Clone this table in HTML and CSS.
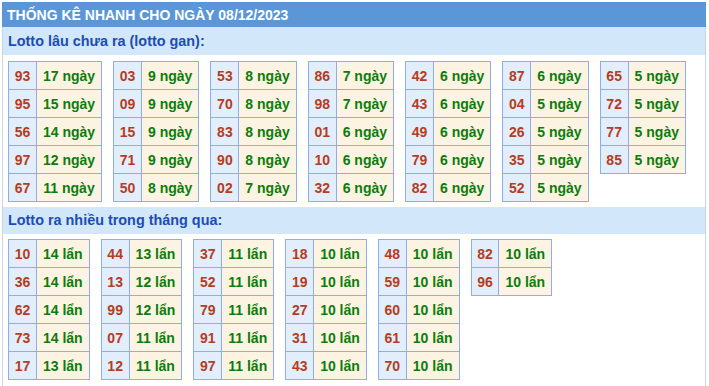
FILE: index.html
```html
<!DOCTYPE html>
<html lang="vi">
<head>
<meta charset="utf-8">
<link rel="stylesheet" href="styles.css">
</head>
<body>
<div class="wrap">
  <div class="title">THỐNG KÊ NHANH CHO NGÀY 08/12/2023</div>
  <div class="box">
    <div class="band">Lotto lâu chưa ra (lotto gan):</div>
    <div class="grid grid1">
      <table class="t"><tr><td class="n">93</td><td class="v">17 ngày</td></tr><tr><td class="n">95</td><td class="v">15 ngày</td></tr><tr><td class="n">56</td><td class="v">14 ngày</td></tr><tr><td class="n">97</td><td class="v">12 ngày</td></tr><tr><td class="n">67</td><td class="v">11 ngày</td></tr></table>
      <table class="t"><tr><td class="n">03</td><td class="v">9 ngày</td></tr><tr><td class="n">09</td><td class="v">9 ngày</td></tr><tr><td class="n">15</td><td class="v">9 ngày</td></tr><tr><td class="n">71</td><td class="v">9 ngày</td></tr><tr><td class="n">50</td><td class="v">8 ngày</td></tr></table>
      <table class="t"><tr><td class="n">53</td><td class="v">8 ngày</td></tr><tr><td class="n">70</td><td class="v">8 ngày</td></tr><tr><td class="n">83</td><td class="v">8 ngày</td></tr><tr><td class="n">90</td><td class="v">8 ngày</td></tr><tr><td class="n">02</td><td class="v">7 ngày</td></tr></table>
      <table class="t"><tr><td class="n">86</td><td class="v">7 ngày</td></tr><tr><td class="n">98</td><td class="v">7 ngày</td></tr><tr><td class="n">01</td><td class="v">6 ngày</td></tr><tr><td class="n">10</td><td class="v">6 ngày</td></tr><tr><td class="n">32</td><td class="v">6 ngày</td></tr></table>
      <table class="t"><tr><td class="n">42</td><td class="v">6 ngày</td></tr><tr><td class="n">43</td><td class="v">6 ngày</td></tr><tr><td class="n">49</td><td class="v">6 ngày</td></tr><tr><td class="n">79</td><td class="v">6 ngày</td></tr><tr><td class="n">82</td><td class="v">6 ngày</td></tr></table>
      <table class="t"><tr><td class="n">87</td><td class="v">6 ngày</td></tr><tr><td class="n">04</td><td class="v">5 ngày</td></tr><tr><td class="n">26</td><td class="v">5 ngày</td></tr><tr><td class="n">35</td><td class="v">5 ngày</td></tr><tr><td class="n">52</td><td class="v">5 ngày</td></tr></table>
      <table class="t"><tr><td class="n">65</td><td class="v">5 ngày</td></tr><tr><td class="n">72</td><td class="v">5 ngày</td></tr><tr><td class="n">77</td><td class="v">5 ngày</td></tr><tr><td class="n">85</td><td class="v">5 ngày</td></tr></table>
    </div>
    <div class="band band2">Lotto ra nhiều trong tháng qua:</div>
    <div class="grid grid2">
      <table class="t"><tr><td class="n">10</td><td class="v">14 lẩn</td></tr><tr><td class="n">36</td><td class="v">14 lẩn</td></tr><tr><td class="n">62</td><td class="v">14 lẩn</td></tr><tr><td class="n">73</td><td class="v">14 lẩn</td></tr><tr><td class="n">17</td><td class="v">13 lẩn</td></tr></table>
      <table class="t"><tr><td class="n">44</td><td class="v">13 lẩn</td></tr><tr><td class="n">13</td><td class="v">12 lẩn</td></tr><tr><td class="n">99</td><td class="v">12 lẩn</td></tr><tr><td class="n">07</td><td class="v">11 lẩn</td></tr><tr><td class="n">12</td><td class="v">11 lẩn</td></tr></table>
      <table class="t"><tr><td class="n">37</td><td class="v">11 lẩn</td></tr><tr><td class="n">52</td><td class="v">11 lẩn</td></tr><tr><td class="n">79</td><td class="v">11 lẩn</td></tr><tr><td class="n">91</td><td class="v">11 lẩn</td></tr><tr><td class="n">97</td><td class="v">11 lẩn</td></tr></table>
      <table class="t"><tr><td class="n">18</td><td class="v">10 lẩn</td></tr><tr><td class="n">19</td><td class="v">10 lẩn</td></tr><tr><td class="n">27</td><td class="v">10 lẩn</td></tr><tr><td class="n">31</td><td class="v">10 lẩn</td></tr><tr><td class="n">43</td><td class="v">10 lẩn</td></tr></table>
      <table class="t"><tr><td class="n">48</td><td class="v">10 lẩn</td></tr><tr><td class="n">59</td><td class="v">10 lẩn</td></tr><tr><td class="n">60</td><td class="v">10 lẩn</td></tr><tr><td class="n">61</td><td class="v">10 lẩn</td></tr><tr><td class="n">70</td><td class="v">10 lẩn</td></tr></table>
      <table class="t"><tr><td class="n">82</td><td class="v">10 lẩn</td></tr><tr><td class="n">96</td><td class="v">10 lẩn</td></tr></table>
    </div>
  </div>
</div>
</body>
</html>
```
FILE: styles.css
```css
html, body {
  margin: 0;
  padding: 0;
  background: #ffffff;
}
body {
  font-family: "Liberation Sans", Arial, sans-serif;
  font-weight: bold;
}
.wrap {
  margin: 2px 0 0 2px;
  width: 704px;
}
.title {
  height: 25px;
  line-height: 26px;
  background: #5b97d6;
  color: #ffffff;
  font-size: 14px;
  padding-left: 5px;
}
.box {
  border-left: 1px solid #c9d3e2;
  border-right: 1px solid #c9d3e2;
  padding-bottom: 6px;
}
.band {
  height: 28px;
  line-height: 28px;
  background: #d3e7fb;
  color: #1a4db3;
  font-size: 14.4px;
  padding-left: 5px;
}
.band2 {
  height: 27px;
  line-height: 27px;
}
.grid {
  display: flex;
  align-items: flex-start;
  gap: 11px;
  padding: 6px 5px;
}
.grid1 {
  padding-bottom: 5px;
}
.grid2 {
  padding-top: 5px;
}
.t {
  border-collapse: collapse;
  font-size: 14px;
}
.t td {
  height: 27px;
  border: 1px solid #8daeec;
  text-align: center;
  white-space: nowrap;
}
.t .n {
  padding: 0 5.7px;
  background: #e2eefc;
  color: #b53d1c;
}
.t .v {
  padding: 0 6px;
  background: #fdf3e2;
  color: #0b7d0b;
}
```
